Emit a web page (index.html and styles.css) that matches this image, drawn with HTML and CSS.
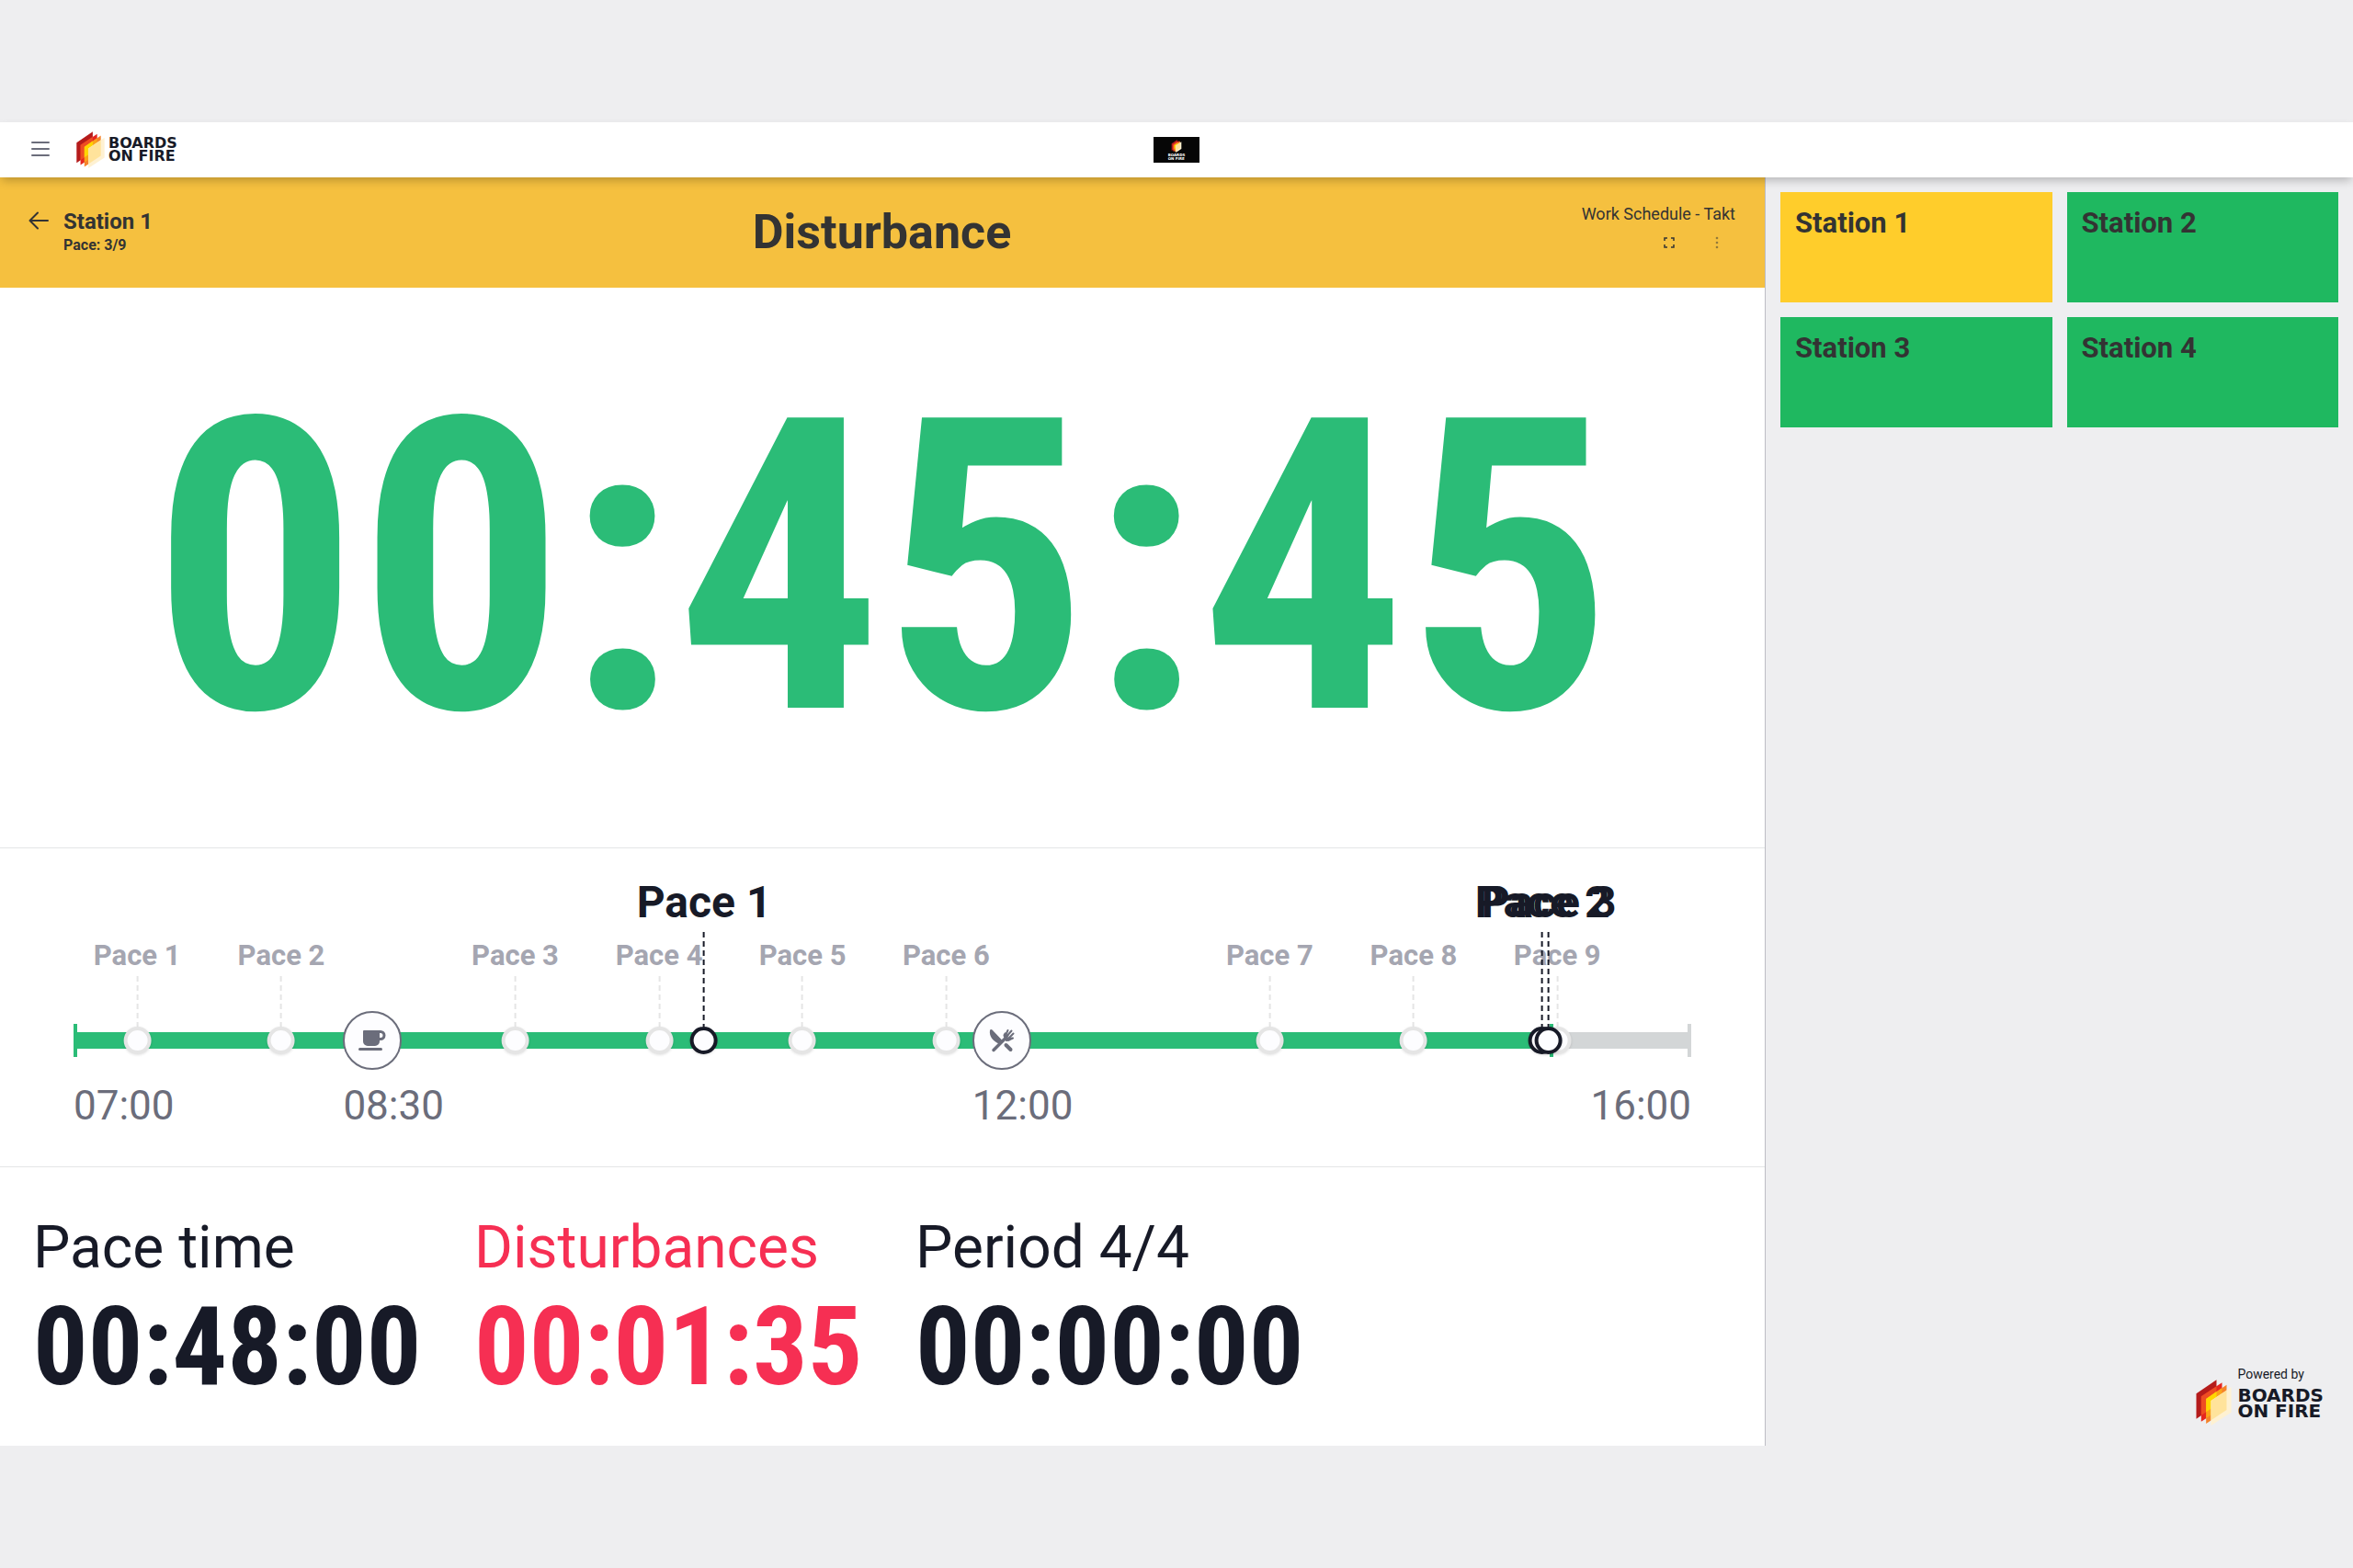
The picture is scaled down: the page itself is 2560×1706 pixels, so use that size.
FILE: index.html
```html
<!DOCTYPE html>
<html lang="en">
<head>
<meta charset="utf-8">
<meta name="viewport" content="width=device-width, initial-scale=1">
<title>Station 1 - Boards on Fire</title>
<link rel="stylesheet" href="styles.css">
</head>
<body>
<svg class="sprite" aria-hidden="true">
  <symbol id="mark" viewBox="143 122 116 150">
    <path fill="#b51b1b" d="M144 168l66-45v82l-66 45z"/>
    <path fill="#e5261f" d="M160 177l68-45v82l-68 45z"/>
    <path fill="#ee4d23" d="M160 177l50-33v61l-50 34z"/>
    <path fill="#f5822a" d="M176 185l67-46v82l-67 45z"/>
    <path fill="#fba31a" d="M176 185l52-36v65l-52 34z"/>
    <path fill="#ffd600" d="M176 185l34-24v44l-34 23z"/>
    <path fill="#fef1d2" d="M192 191l66-44v82l-66 43z"/>
    <path fill="#ffe39b" d="M192 191l51-34v64l-51 34z"/>
  </symbol>
</svg>

<div class="app">
  <header class="topbar">
    <button class="icon-button" type="button" aria-label="Menu">
      <svg width="20" height="18" viewBox="0 0 20 18" fill="none" stroke="#6b6d7b" stroke-width="2" stroke-linecap="round"><path d="M1 1h18M1 8h18M1 15h18"/></svg>
    </button>
    <a class="brand" href="#">
      <svg class="brand-mark" aria-hidden="true"><use href="#mark"/></svg>
      <span class="brand-name">BOARDS<br>ON FIRE</span>
    </a>
    <div class="tenant">
      <svg class="tenant-mark" aria-hidden="true"><use href="#mark"/></svg>
      <span class="tenant-name">BOARDS<br>ON FIRE</span>
    </div>
  </header>

  <div class="content">
    <main class="station">
      <section class="banner">
        <div class="banner-left">
          <a class="back" href="#" aria-label="Back">
            <svg width="22" height="20" viewBox="0 0 22 20" fill="none" stroke="#333" stroke-width="2" stroke-linecap="round" stroke-linejoin="round"><path d="M21 10H1.500M10 1.500L1.500 10l8.500 8.500"/></svg>
          </a>
          <div>
            <div class="station-name">Station 1</div>
            <div class="station-pace">Pace: 3/9</div>
          </div>
        </div>
        <h1 class="status">Disturbance</h1>
        <div class="banner-right">
          <div class="schedule">Work Schedule - Takt</div>
          <div class="actions">
            <button class="action" type="button" aria-label="Full screen">
              <svg width="12" height="12" viewBox="0 0 12 12" fill="none" stroke="#333" stroke-width="1.500"><path d="M1 4V1h3M8 1h3v3M11 8v3H8M4 11H1V8"/></svg>
            </button>
            <button class="action" type="button" aria-label="More">
              <svg width="4" height="14" viewBox="0 0 4 14" fill="#333" fill-opacity=".5"><circle cx="2" cy="2" r="1.300"/><circle cx="2" cy="7" r="1.300"/><circle cx="2" cy="12" r="1.300"/></svg>
            </button>
          </div>
        </div>
      </section>

      <section class="timer"><time>00:45:45</time></section>

      <section class="timeline">
        <div class="track">
          <div class="progress" style="width:91.5%"></div>

          <div class="marker" style="left:3.93%"><span class="label">Pace 1</span><i class="stem"></i><i class="dot"></i></div>
          <div class="marker" style="left:12.84%"><span class="label">Pace 2</span><i class="stem"></i><i class="dot"></i></div>
          <div class="marker" style="left:27.3%"><span class="label">Pace 3</span><i class="stem"></i><i class="dot"></i></div>
          <div class="marker" style="left:36.2%"><span class="label">Pace 4</span><i class="stem"></i><i class="dot"></i></div>
          <div class="marker" style="left:45.06%"><span class="label">Pace 5</span><i class="stem"></i><i class="dot"></i></div>
          <div class="marker" style="left:53.94%"><span class="label">Pace 6</span><i class="stem"></i><i class="dot"></i></div>
          <div class="marker" style="left:73.94%"><span class="label">Pace 7</span><i class="stem"></i><i class="dot"></i></div>
          <div class="marker" style="left:82.84%"><span class="label">Pace 8</span><i class="stem"></i><i class="dot"></i></div>
          <div class="marker" style="left:91.72%"><span class="label">Pace 9</span><i class="stem"></i><i class="dot"></i></div>

          <div class="marker done" style="left:38.98%"><span class="label">Pace 1</span><i class="stem"></i><i class="dot"></i></div>
          <div class="marker done" style="left:90.8%"><span class="label">Pace 2</span><i class="stem"></i><i class="dot"></i></div>
          <div class="marker done" style="left:91.2%"><span class="label">Pace 3</span><i class="stem"></i><i class="dot"></i></div>

          <div class="break" style="left:16.67%">
            <svg width="30" height="22" viewBox="0 0 30 22" fill="#6b6d7b"><path fill-rule="evenodd" d="M6 0h18a5.500 5.500 0 010 11h-1v1a5 5 0 01-5 5h-8a5 5 0 01-5-5V1a1 1 0 011-1zm17 3v5h1a2.500 2.500 0 000-5z"/><rect x="0" y="19" width="26" height="3" rx="1.500"/></svg>
          </div>
          <div class="break" style="left:55.56%">
            <svg width="28" height="26" viewBox="0 0 28 26" fill="none" stroke="#6b6d7b" stroke-linecap="round"><path fill="#6b6d7b" stroke="none" d="M1 2c.5-1.500 2-1.300 3 0l10 10.500-3.500 4C4 13.500 0 8 1 2z"/><path stroke-width="4" d="M18.500 18l5 5"/><path stroke-width="3.500" d="M5 23.500L18 10.500"/><path stroke-width="2" d="M18 10L24.500 2.500M20 12l6.500-6.500M17.500 8.500L20.500 2M21.500 12.500l4.500-2"/><path fill="#6b6d7b" stroke="none" d="M15.500 8c0-2 1-3 2.500-4l1 5 3-2-1.500 3 5-.500c-2 4-4 4.500-7 4.500z"/></svg>
          </div>

          <time class="tick" style="left:0">07:00</time>
          <time class="tick" style="left:16.67%">08:30</time>
          <time class="tick" style="left:55.56%">12:00</time>
          <time class="tick tick-end">16:00</time>
        </div>
      </section>

      <section class="stats">
        <div class="stat"><div class="stat-label">Pace time</div><div class="stat-value">00:48:00</div></div>
        <div class="stat alert"><div class="stat-label">Disturbances</div><div class="stat-value">00:01:35</div></div>
        <div class="stat"><div class="stat-label">Period 4/4</div><div class="stat-value">00:00:00</div></div>
      </section>
    </main>

    <aside class="side">
      <nav class="tiles">
        <a class="tile warn" href="#">Station 1</a>
        <a class="tile" href="#">Station 2</a>
        <a class="tile" href="#">Station 3</a>
        <a class="tile" href="#">Station 4</a>
      </nav>
      <a class="powered" href="#">
        <svg class="powered-mark" aria-hidden="true"><use href="#mark"/></svg>
        <span class="powered-text"><span class="powered-by">Powered by</span><span class="powered-name">BOARDS<br>ON FIRE</span></span>
      </a>
    </aside>
  </div>
</div>
</body>
</html>
```
FILE: styles.css
```css
* { box-sizing: border-box; }
body {
  margin: 0;
  min-height: 100vh;
  display: flex;
  align-items: center;
  background: #eeeef0;
  color: #171a27;
  font-family: Roboto, "Liberation Sans", sans-serif;
}
a { color: inherit; text-decoration: none; }
button { padding: 0; border: 0; background: none; cursor: pointer; }
svg { display: block; }
.sprite { position: absolute; width: 0; height: 0; }

.app { width: 100%; min-height: 56.25vw; display: flex; flex-direction: column; }

/* Top bar */
.topbar {
  position: relative;
  z-index: 2;
  height: 60px;
  padding: 0 34px;
  display: flex;
  align-items: center;
  gap: 29px;
  background: #fff;
  box-shadow: 0 5px 10px -2px rgba(0, 0, 0, .25);
}
.brand { display: flex; align-items: center; gap: 4px; }
.brand-mark { width: 31px; height: 40px; }
.brand-name { font: 700 16px/14px "DejaVu Sans", sans-serif; }
.tenant {
  position: absolute;
  left: 50%;
  top: 16px;
  transform: translateX(-50%);
  width: 50px;
  height: 28px;
  display: flex;
  flex-direction: column;
  align-items: center;
  justify-content: center;
  gap: 1px;
  background: #060606;
  color: #fff;
}
.tenant-mark { width: 12px; height: 14px; }
.tenant-name { font: 700 4px/4px "DejaVu Sans", sans-serif; }

.content { flex: 1; display: grid; grid-template-columns: 3fr 1fr; }
.station { display: flex; flex-direction: column; background: #fff; }

/* Status banner */
.banner {
  height: 120px;
  padding: 0 32px 0 31px;
  display: grid;
  grid-template-columns: 1fr auto 1fr;
  align-items: center;
  background: #f5c03f;
  color: #333;
}
.banner-left { display: flex; gap: 16px; padding-bottom: 4px; }
.back { padding-top: 5px; }
.station-name { font-size: 24px; line-height: 32px; font-weight: 700; }
.station-pace { font-size: 16px; line-height: 20px; font-weight: 700; }
.status { margin: 0; font-size: 52px; line-height: 60px; font-weight: 700; }
.banner-right { display: flex; flex-direction: column; align-items: flex-end; gap: 9px; padding-bottom: 12px; }
.schedule { font-size: 18px; line-height: 24px; }
.actions { display: flex; gap: 12px; }
.action { width: 40px; height: 20px; display: grid; place-items: center; }

/* Countdown */
.timer {
  flex: 1;
  display: grid;
  place-items: center;
  border-bottom: 1px solid #e4e5e7;
  color: #2bbc77;
  font: 700 444px/460px "Roboto Condensed", Roboto, sans-serif;
}

/* Timeline */
.timeline { padding: 200px 80px 128px; border-bottom: 1px solid #e4e5e7; }
.track { position: relative; height: 18px; background: #d3d6d7; }
.track::after, .progress::before, .progress::after {
  content: "";
  position: absolute;
  top: -9px;
  width: 4px;
  height: 36px;
  background: #2bbc77;
}
.track::after { right: 0; background: #d3d6d7; }
.progress { position: relative; height: 100%; background: #2bbc77; }
.progress::before { left: 0; }
.progress::after { right: 0; }
.marker {
  position: absolute;
  bottom: -6px;
  transform: translateX(-50%);
  display: flex;
  flex-direction: column;
  align-items: center;
}
.label {
  margin-bottom: 2px;
  color: #a5a6b1;
  font-size: 31px;
  line-height: 40px;
  font-weight: 700;
  white-space: nowrap;
}
.stem {
  width: 2px;
  height: 55px;
  background: repeating-linear-gradient(#e5e5e5 0 6px, transparent 6px 10px);
}
.dot {
  width: 30px;
  height: 30px;
  border: 4px solid #e5e5e5;
  border-radius: 50%;
  background: #fdfdff;
  box-shadow: 0 1px 3px rgba(0, 0, 0, .12);
}
.done { z-index: 1; }
.done .label { color: #171a27; font-size: 48px; line-height: 60px; }
.done .stem {
  height: 103px;
  background: repeating-linear-gradient(#171a27 0 6px, transparent 6px 10px);
}
.done .dot { border-color: #171a27; }
.break {
  position: absolute;
  top: -23px;
  width: 64px;
  height: 64px;
  display: grid;
  place-items: center;
  border: 2px solid #6b6d7b;
  border-radius: 50%;
  background: #fdfdff;
}
.tick {
  position: absolute;
  top: 56px;
  color: #6b6d7b;
  font-size: 44px;
  line-height: 48px;
}
.tick-end { right: 0; }

/* Totals */
.stats {
  padding: 56px 0 43px;
  display: grid;
  grid-template-columns: repeat(4, 1fr);
}
.stat { padding-left: 36px; }
.stat-label { margin-bottom: 12px; font-size: 64px; line-height: 64px; }
.stat-value { font: 700 118px/128px "Roboto Condensed", Roboto, sans-serif; }
.alert { color: #f62f53; }

/* Side panel */
.side {
  padding: 16px 16px 22px;
  display: flex;
  flex-direction: column;
  justify-content: space-between;
  border-left: 1px solid #bdbdc4;
}
.tiles { display: grid; grid-template-columns: 1fr 1fr; gap: 16px; }
.tile {
  height: 120px;
  padding: 16px;
  background: #1fb860;
  color: #333;
  font-size: 31px;
  line-height: 36px;
  font-weight: 700;
}
.warn { background: #ffcd2b; }
.powered { align-self: flex-end; padding-right: 16px; display: flex; align-items: flex-end; gap: 6px; }
.powered-mark { width: 39px; height: 50px; }
.powered-text { display: flex; flex-direction: column; padding-bottom: 7px; }
.powered-by { margin-bottom: 7px; font-size: 14px; line-height: 16px; }
.powered-name { font: 700 20px/17px "DejaVu Sans", sans-serif; }
```
